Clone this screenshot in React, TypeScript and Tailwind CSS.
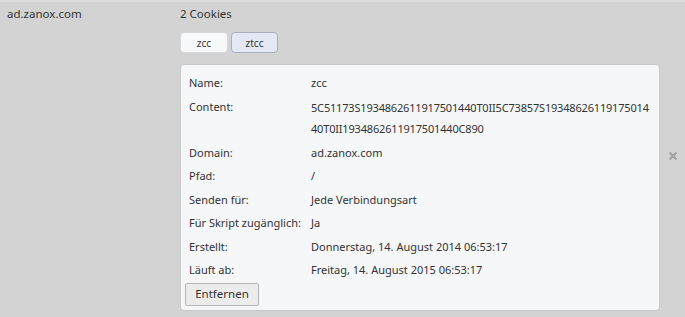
import { useState } from 'react';

const rows: { label: string; value: string[] }[] = [
  { label: 'Name:', value: ['zcc'] },
  {
    label: 'Content:',
    value: ['5C51173S1934862611917501440T0II5C73857S19348626119175014', '40T0II1934862611917501440C890'],
  },
  { label: 'Domain:', value: ['ad.zanox.com'] },
  { label: 'Pfad:', value: ['/'] },
  { label: 'Senden für:', value: ['Jede Verbindungsart'] },
  { label: 'Für Skript zugänglich:', value: ['Ja'] },
  { label: 'Erstellt:', value: ['Donnerstag, 14. August 2014 06:53:17'] },
  { label: 'Läuft ab:', value: ['Freitag, 14. August 2015 06:53:17'] },
];

export default function App() {
  const [active, setActive] = useState('zcc');

  return (
    <div
      className="w-[685px] h-[317px] overflow-hidden bg-[#d3d3d3] text-[11px] text-[#333] border-t-2 border-[#dcdcdc]"
      style={{ fontFamily: '"Noto Sans", "Open Sans", sans-serif' }}
    >
      <div className="flex pt-[3px]">
        {/* Site */}
        <div className="w-[180px] shrink-0 pl-[7px] leading-[18px] text-[11.5px]">ad.zanox.com</div>

        {/* Cookies */}
        <div className="w-[480px] shrink-0 flex flex-col">
          <div className="leading-[18px] text-[11.5px]">2 Cookies</div>
          <div className="flex gap-[3px] mt-[9px]">
            {['zcc', 'ztcc'].map((c) => (
              <button
                key={c}
                type="button"
                onClick={() => setActive(c)}
                className={
                  c === 'ztcc'
                    ? 'w-[47px] h-[21px] rounded-[4px] border border-[#a9aec0] bg-[#e4e8f4] text-[10px] leading-none'
                    : 'w-[48px] h-[21px] rounded-[4px] border border-[#d8d8d8] bg-[#f7f8fa] text-[10px] leading-none'
                }
              >
                {c}
              </button>
            ))}
          </div>

          {/* Details card */}
          <div className="mt-[11px] h-[247px] rounded-[4px] border border-[#c8c8c8] bg-[#f6f7f9] pl-[8px] pt-[6px]">
            {rows.map((r) => (
              <div key={r.label} className="flex py-[2px]">
                <div className="w-[122px] shrink-0 whitespace-nowrap leading-[19.5px]">{r.label}</div>
                <div
                  className={
                    r.value.length > 1
                      ? 'whitespace-nowrap leading-[21px] tracking-[-0.18px]'
                      : 'whitespace-nowrap leading-[19.5px]'
                  }
                >
                  {r.value.map((v) => (
                    <div key={v}>{v}</div>
                  ))}
                </div>
              </div>
            ))}
            <button
              type="button"
              className="mt-[1px] ml-[-4px] w-[74px] h-[23px] rounded-[2px] border border-[#b5b5b5] bg-[#ececec] text-[11.5px] leading-none text-[#333]"
            >
              Entfernen
            </button>
          </div>
        </div>

        {/* Close */}
        <div className="flex-1 flex items-start justify-center pt-[146px]">
          <svg width="10" height="10" viewBox="0 0 10 10">
            <path d="M1.5 1.5L8.5 8.5M8.5 1.5L1.5 8.5" stroke="#a0a0a0" strokeWidth="2" />
          </svg>
        </div>
      </div>
    </div>
  );
}
